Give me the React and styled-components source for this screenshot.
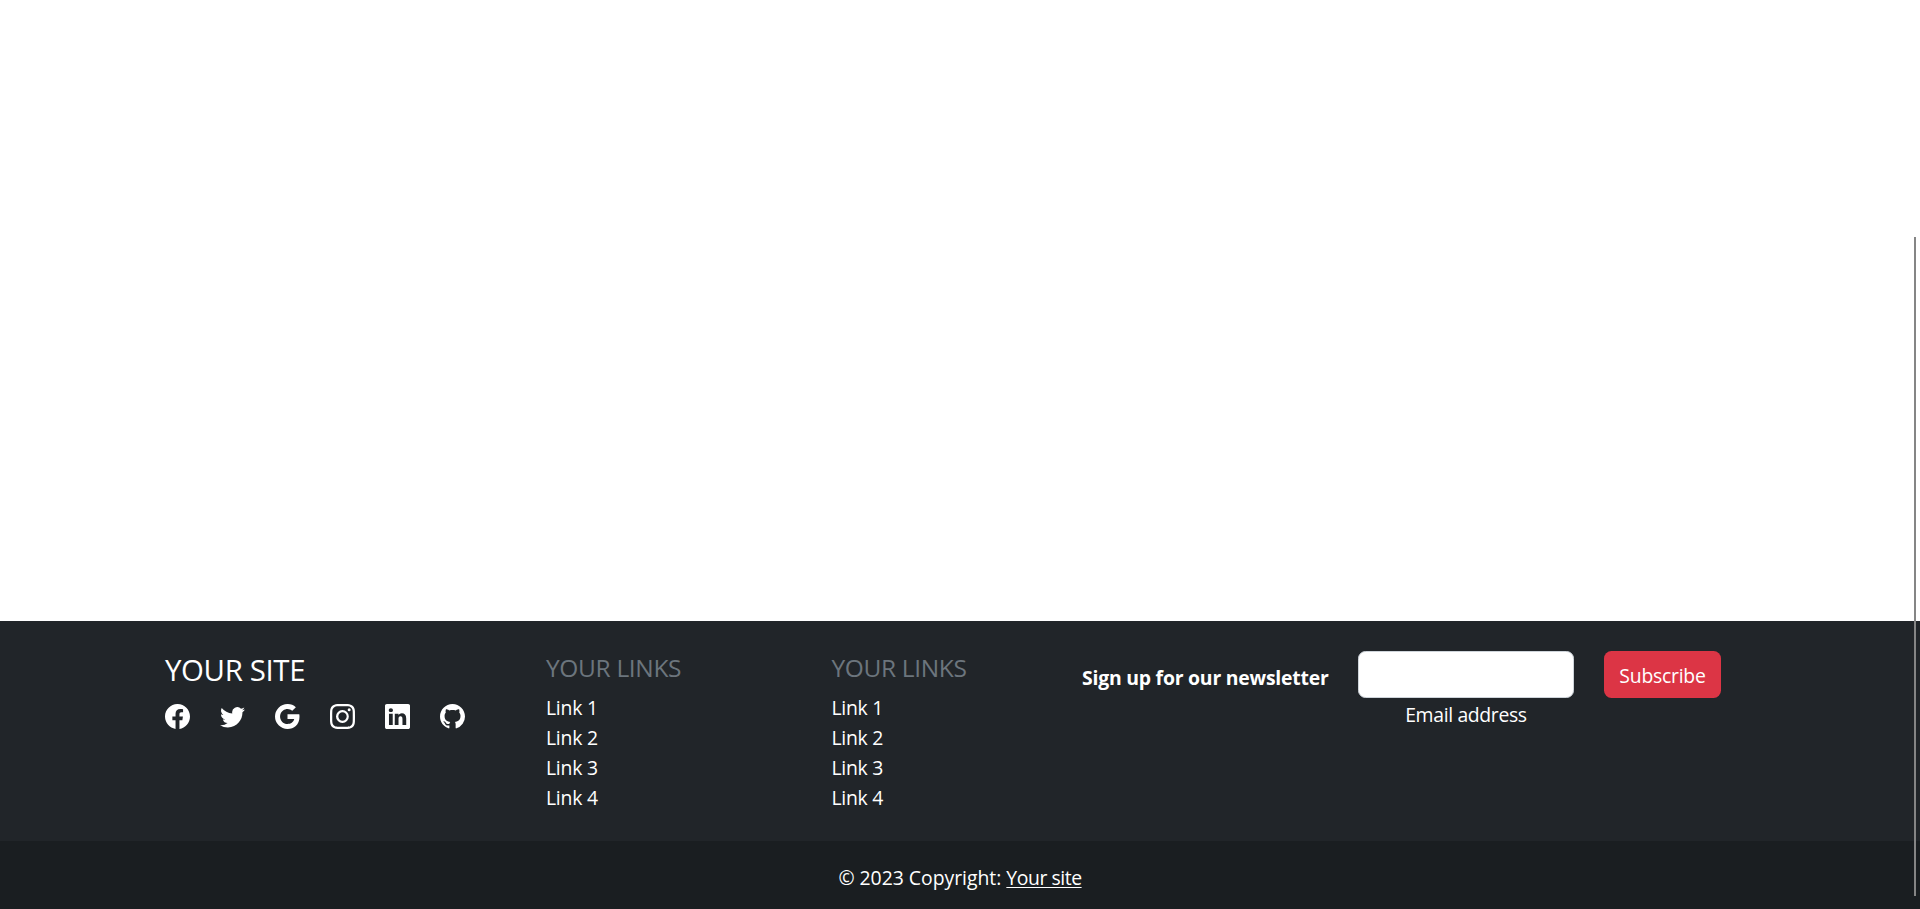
import React from 'react';
import styled, { createGlobalStyle } from 'styled-components';
import { BsFacebook, BsTwitter, BsGoogle, BsInstagram, BsLinkedin, BsGithub } from 'react-icons/bs';

const GlobalStyle = createGlobalStyle`
  * { box-sizing: border-box; }
  body {
    margin: 0;
    background: #fff;
    overflow: hidden;
    color: #fff;
    font: 400 19.4px/30px 'Segoe UI', 'Open Sans', sans-serif;
  }
`;

const Page = styled.div`
  height: 909px;
  display: flex;
  flex-direction: column;
  justify-content: flex-end;
`;

const ScrollThumb = styled.div`
  position: fixed;
  top: 237px;
  right: 4px;
  width: 2px;
  height: 659px;
  background: #858585;
`;

const Footer = styled.footer`
  background: #212529;
`;

const Columns = styled.div`
  height: 220px;
  padding: 30px 0 0 165px;
  display: grid;
  grid-template-columns: 381px 285.4px 250.6px 1fr;
  align-items: start;
`;

const SiteName = styled.h4`
  margin: 1px 0 16px;
  font-size: 29.4px;
  font-weight: 400;
  line-height: 36px;
  letter-spacing: -0.36px;
`;

const Socials = styled.div`
  display: flex;
  gap: 30px;

  svg {
    display: block;
    width: 25px;
    height: 25px;
  }
`;

const LinksTitle = styled.h5`
  margin: 2px 0 10px;
  color: #6c757d;
  font-size: 24.5px;
  font-weight: 400;
  line-height: 30px;
  letter-spacing: -0.34px;
`;

const LinkList = styled.ul`
  margin: 0;
  padding: 0;
  list-style: none;
  letter-spacing: -0.25px;
`;

const Anchor = styled.a`
  color: #fff;
  letter-spacing: ${({ $spacing }) => $spacing || 'inherit'};
  text-decoration: ${({ $underlined }) => ($underlined ? 'underline' : 'none')};
  text-decoration-thickness: 1px;
  text-underline-offset: 2px;
`;

const Newsletter = styled.form`
  display: flex;
  align-items: flex-start;
  gap: 30px;
`;

const Prompt = styled.strong`
  width: 246px;
  padding-top: 12px;
  font-weight: 700;
  letter-spacing: -0.22px;
  white-space: nowrap;
`;

const Field = styled.div`
  width: 216px;
  display: flex;
  flex-direction: column;
`;

const EmailInput = styled.input`
  width: 100%;
  height: 47px;
  padding: 7px 15px;
  border: 1px solid #ced4da;
  border-radius: 7.5px;
  background: #fff;
  font: inherit;
`;

const FieldLabel = styled.label`
  margin-top: 2px;
  text-align: center;
  letter-spacing: -0.35px;
`;

const SubscribeButton = styled.button`
  width: 117px;
  height: 47px;
  padding: 2px 0 0;
  border: 0;
  border-radius: 7.5px;
  background: #dc3545;
  color: #fff;
  font: inherit;
  letter-spacing: -0.25px;
`;

const Copyright = styled.div`
  height: 68px;
  padding-top: 22px;
  background: #1a1e21;
  text-align: center;
  letter-spacing: -0.02px;
`;

const socialIcons = [BsFacebook, BsTwitter, BsGoogle, BsInstagram, BsLinkedin, BsGithub];
const links = ['Link 1', 'Link 2', 'Link 3', 'Link 4'];

function LinkColumn() {
  return (
    <div>
      <LinksTitle>YOUR LINKS</LinksTitle>
      <LinkList>
        {links.map((label) => (
          <li key={label}>
            <Anchor href="#">{label}</Anchor>
          </li>
        ))}
      </LinkList>
    </div>
  );
}

export default function App() {
  return (
    <Page>
      <GlobalStyle />
      <Footer>
        <Columns>
          <div>
            <SiteName>YOUR SITE</SiteName>
            <Socials>
              {socialIcons.map((Icon, i) => (
                <Icon key={i} />
              ))}
            </Socials>
          </div>
          <LinkColumn />
          <LinkColumn />
          <Newsletter>
            <Prompt>Sign up for our newsletter</Prompt>
            <Field>
              <EmailInput id="email" type="email" />
              <FieldLabel htmlFor="email">Email address</FieldLabel>
            </Field>
            <SubscribeButton type="button">Subscribe</SubscribeButton>
          </Newsletter>
        </Columns>
        <Copyright>
          © 2023 Copyright: <Anchor href="#" $underlined $spacing="-0.45px">Your site</Anchor>
        </Copyright>
      </Footer>
      <ScrollThumb />
    </Page>
  );
}
